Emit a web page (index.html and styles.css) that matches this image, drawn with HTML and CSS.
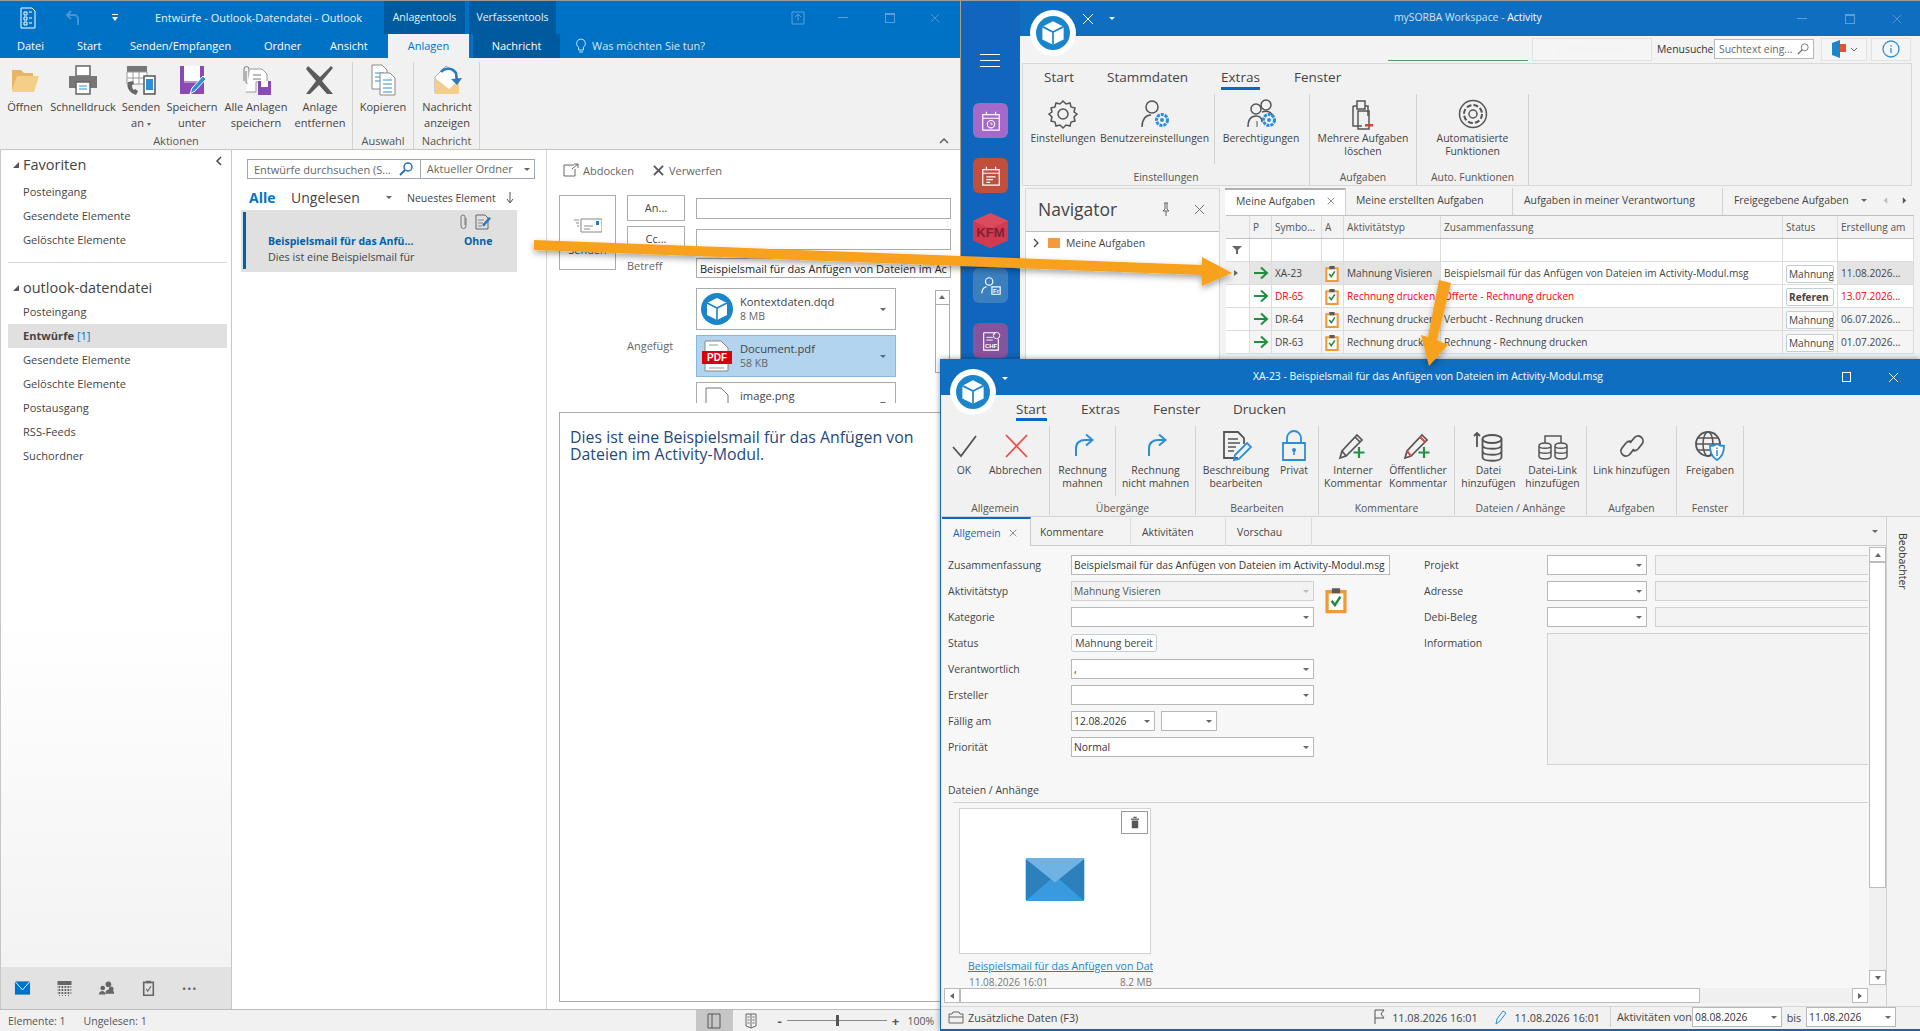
FILE: index.html
```html
<!DOCTYPE html>
<html lang="de">
<head>
    <meta charset="UTF-8">
    <title>Outlook und mySORBA</title>
    <link rel="stylesheet" href="styles.css">
</head>
<body>
    <svg class="defs" width="0" height="0">
        <symbol id="cube" viewBox="0 0 32 32">
            <circle cx="16" cy="16" r="16" fill="#1a85cb"/>
            <path d="M16 5l10 5v12l-10 5-10-5V10z" fill="#fff"/>
            <path d="M6 10l10 5 10-5M16 15v12" fill="none" stroke="#1a85cb" stroke-width="1.6"/>
        </symbol>
        <symbol id="clipboard" viewBox="0 0 16 20">
            <path d="M1.5 4h13v14.500h-13z" fill="#fff" stroke="#f09a37" stroke-width="2.4"/>
            <path d="M5 1.500h6V5H5z" fill="#5a5a5a"/>
            <path d="M4.800 10.500l2.400 3.200 4-6.200" fill="none" stroke="#218a43" stroke-width="1.8"/>
        </symbol>
        <symbol id="go" viewBox="0 0 16 16">
            <path d="M1 8h12M8 2.500L14 8l-6 5.500" fill="none" stroke="#1f8f3f" stroke-width="2"/>
        </symbol>
        <symbol id="turn" viewBox="0 0 32 32">
            <path d="M9 26V18c0-5 4-8 9-8h6M19 4.500l6.500 5.500L19 15.500" fill="none" stroke="#2a8fd6" stroke-width="2"/>
        </symbol>
        <symbol id="pencil-plus" viewBox="0 0 32 32">
            <path d="M3 28l2-7L20 5l5 5L9 26z M5 21l4 5 M18 7l5 5" fill="none" stroke="#555" stroke-width="1.7"/>
            <path d="M22 17v11M16.500 22.500h11" stroke="#259147" stroke-width="2.2"/>
        </symbol>
        <symbol id="trash" viewBox="0 0 12 16">
            <path d="M1 3h10v1.500H1zM4 1h4v1.500H4zM2 5.500h8V15H2z" fill="#555"/>
        </symbol>
        <symbol id="win-close" viewBox="0 0 12 12">
            <path d="M1 1l10 10M11 1L1 11" stroke="currentColor" fill="none" stroke-width="1"/>
        </symbol>
    </svg>

    <!-- Outlook -->
    <div class="window outlook">
        <div class="ol-title">
            <svg class="ol-appicon" viewBox="0 0 18 22"><path d="M2 1h11l3 3v17H2z" fill="none" stroke="#fff"/><path d="M5 5h3v3H5zM10 5h3M5 10h3v3H5zM10 11h3M5 15h3v3H5zM10 16h3" fill="none" stroke="#fff"/></svg>
            <svg class="ol-undo" viewBox="0 0 16 18"><path d="M6 2L2 6l4 4M2 6h7a4 4 0 0 1 4 4v6" fill="none" stroke="#4d93d2" stroke-width="2"/></svg>
            <svg class="ol-qat" viewBox="0 0 8 10"><path d="M1 1h6v1H1zM1 4h6L4 8z" fill="#fff"/></svg>
            <span class="ol-caption">Entwürfe - Outlook-Datendatei - Outlook</span>
            <span class="ctx-tab ctx-a">Anlagentools</span>
            <span class="ctx-tab ctx-b">Verfassentools</span>
            <span class="ol-winbtns">
                <svg class="wb-pin" viewBox="0 0 14 16"><path d="M1 2h12v12H1zM7 11V5M4 7l3-3 3 3" fill="none" stroke="#5a9fd8"/></svg>
                <i class="wb-min"></i>
                <i class="wb-max"></i>
                <svg class="wb-x" viewBox="0 0 12 12"><use href="#win-close"/></svg>
            </span>
        </div>
        <div class="ol-tabs">
            <span>Datei</span>
            <span>Start</span>
            <span>Senden/Empfangen</span>
            <span>Ordner</span>
            <span>Ansicht</span>
            <span class="tab-on">Anlagen</span>
            <span></span>
            <span class="tab-dark">Nachricht</span>
            <span></span>
            <span class="tell-me">
                <svg viewBox="0 0 12 16"><path d="M6 1a4.500 4.500 0 0 0-2.500 8.200V12h5V9.200A4.500 4.500 0 0 0 6 1zM4 14h4" fill="none" stroke="#bfe0f6"/></svg>
                Was möchten Sie tun?
            </span>
        </div>
        <div class="ol-ribbon">
            <div class="rb-group w353">
                <div class="rb-items">
                    <div class="rb-btn w50">
                        <svg viewBox="0 0 32 32"><path d="M3 6h9l3 3h9v4H8L3 27z" fill="#e6b566"/><path d="M8 12h22l-5 16H3z" fill="#f5cf88"/></svg>
                        <span>Öffnen</span>
                    </div>
                    <div class="rb-btn w66">
                        <svg viewBox="0 0 32 32"><path d="M9 2h14v10H9z" fill="#fff" stroke="#666" stroke-width="1.500"/><path d="M2 12h28v12H2z" fill="#777"/><path d="M9 18h14v12H9z" fill="#fff" stroke="#666" stroke-width="1.500"/><path d="M12 22h8M12 25h8" stroke="#2a8fd6"/></svg>
                        <span>Schnelldruck</span>
                    </div>
                    <div class="rb-btn w50">
                        <svg viewBox="0 0 32 32"><path d="M2 2h20v6H2z" fill="#777"/><path d="M2 8h20v12H2z" fill="#fff" stroke="#999"/><path d="M8 8v12M14 8v12M2 14h20" stroke="#999"/><path d="M3 18c-2 6 2 11 8 13l2-4-3-2-1 1c-2-1-2-4-2-5l2-1-1-3z" fill="#666"/><path d="M19 12h11v18H19z" fill="#fff" stroke="#555" stroke-width="1.500"/><path d="M21 15h7v11h-7z" fill="#2a8fd6"/></svg>
                        <span>Senden<br>an<small class="mini-caret"></small></span>
                    </div>
                    <div class="rb-btn w52">
                        <svg viewBox="0 0 32 32"><path d="M4 2h24v28H4z" fill="#8a49b5"/><path d="M8 2h16v15H8z" fill="#fff"/><path d="M8 17h16v2H8z" fill="#b38fd0"/><path d="M14 30l2-6 11-12 3 3-11 12z" fill="#2a8fd6" stroke="#fff"/></svg>
                        <span>Speichern<br>unter</span>
                    </div>
                    <div class="rb-btn w76">
                        <svg viewBox="0 0 32 32"><path d="M4 17V5a2.500 2.500 0 0 1 5 0v13a1.500 1.500 0 0 1-3 0V7" fill="none" stroke="#777"/><path d="M10 5h12l5 5v8H16v10H6" fill="#fff" stroke="#999"/><path d="M13 11h8M13 15h8" stroke="#777"/><path d="M18 17h13v14H18z" fill="#8a49b5"/><path d="M21 17h7v6h-7z" fill="#fff"/></svg>
                        <span>Alle Anlagen<br>speichern</span>
                    </div>
                    <div class="rb-btn w52">
                        <svg viewBox="0 0 32 32"><path d="M4 2l12 11L27 2l2 2-11 13 11 13h-6l-8-9-9 9H2l10-13L2 5z" fill="#5c5c5c"/></svg>
                        <span>Anlage<br>entfernen</span>
                    </div>
                </div>
                <div class="rb-label">Aktionen</div>
            </div>
            <div class="rb-group w61">
                <div class="rb-items">
                    <div class="rb-btn w60">
                        <svg viewBox="0 0 32 32"><path d="M5 1h10l5 5v19H5z" fill="#fff" stroke="#888"/><path d="M8 9h9M8 13h9M8 17h9" stroke="#2a8fd6"/><path d="M13 9h10l5 5v17H13z" fill="#fff" stroke="#888"/><path d="M16 16h9M16 20h9M16 24h9M16 28h9" stroke="#2a8fd6"/></svg>
                        <span>Kopieren</span>
                    </div>
                </div>
                <div class="rb-label">Auswahl</div>
            </div>
            <div class="rb-group w66x">
                <div class="rb-items">
                    <div class="rb-btn w66">
                        <svg viewBox="0 0 32 32"><path d="M4 13L15 2l10 8v19H4z" fill="#fff" stroke="#aaa"/><path d="M4 14l14 11 10-9v14H4z" fill="#f3cd8c"/><path d="M10 8c4-5 12-4 15 1l1 8" fill="none" stroke="#2a78c0" stroke-width="2.500"/><path d="M20 15l6 6 5-7z" fill="#2a78c0"/></svg>
                        <span>Nachricht<br>anzeigen</span>
                    </div>
                </div>
                <div class="rb-label">Nachricht</div>
            </div>
            <svg class="ol-collapse" viewBox="0 0 10 6"><path d="M1 5l4-4 4 4" fill="none" stroke="#555" stroke-width="1.300"/></svg>
        </div>
        <div class="ol-main">
            <div class="ol-folders">
                <div class="folder-scroll">
                    <div class="folder-head first">
                        <span class="fold-tri"></span>Favoriten
                        <svg class="fold-back" viewBox="0 0 6 10"><path d="M5 1L1 5l4 4" fill="none" stroke="#444" stroke-width="1.500"/></svg>
                    </div>
                    <div class="folder">Posteingang</div>
                    <div class="folder">Gesendete Elemente</div>
                    <div class="folder">Gelöschte Elemente</div>
                    <hr class="folder-line">
                    <div class="folder-head"><span class="fold-tri"></span>outlook-datendatei</div>
                    <div class="folder">Posteingang</div>
                    <div class="folder folder-on"><b>Entwürfe</b> <em>[1]</em></div>
                    <div class="folder">Gesendete Elemente</div>
                    <div class="folder">Gelöschte Elemente</div>
                    <div class="folder">Postausgang</div>
                    <div class="folder">RSS-Feeds</div>
                    <div class="folder">Suchordner</div>
                </div>
                <div class="ol-nav">
                    <svg viewBox="0 0 18 16"><path d="M1 1h16v14H1z" fill="#0072c6"/><path d="M1 1l8 9 8-9" fill="none" stroke="#fff"/></svg>
                    <svg viewBox="0 0 16 16"><path d="M1 1h14v4H1z" fill="#666"/><path d="M1 7h14M1 10h14M1 13h14M3 6v10M6 6v10M9 6v10M12 6v10" stroke="#666" stroke-dasharray="2 1"/></svg>
                    <svg viewBox="0 0 18 16"><circle cx="11" cy="4" r="3" fill="#666"/><circle cx="5" cy="8" r="2.500" fill="#666"/><circle cx="14" cy="9" r="2.500" fill="#666"/><path d="M1 15c0-5 7-5 7 0zM8 13c0-5 9-5 9 0v1H8z" fill="#666"/></svg>
                    <svg viewBox="0 0 14 20"><path d="M1 3h12v16H1z" fill="none" stroke="#666" stroke-width="2"/><path d="M4 1h6v3H4z" fill="#666"/><path d="M4 11l2 3 4-6" fill="none" stroke="#666" stroke-width="1.300"/></svg>
                    <span class="nav-more">•••</span>
                </div>
            </div>
            <div class="ol-list">
                <div class="search-box">
                    <span class="search-text">Entwürfe durchsuchen (S...</span>
                    <svg viewBox="0 0 14 14"><circle cx="9" cy="5" r="4" fill="none" stroke="#2a6fb5" stroke-width="1.500"/><path d="M6 8l-5 5" stroke="#2a6fb5" stroke-width="2"/></svg>
                    <span class="search-scope">Aktueller Ordner<i class="caret"></i></span>
                </div>
                <div class="list-filter">
                    <b>Alle</b>
                    <span class="unread">Ungelesen</span>
                    <i class="caret"></i>
                    <span class="sort">Neuestes Element</span>
                    <svg viewBox="0 0 8 12"><path d="M4 0v10M1 7l3 4 3-4" fill="none" stroke="#555"/></svg>
                </div>
                <div class="mail-item">
                    <div class="mail-icons">
                        <svg viewBox="0 0 8 16"><path d="M6.500 4v8a2.500 2.500 0 0 1-5 0V3a2 2 0 0 1 4 0v8" fill="none" stroke="#777"/></svg>
                        <svg viewBox="0 0 16 16"><path d="M1 1h9l3 3v11H1z" fill="none" stroke="#666"/><path d="M3 6h6M3 9h5M3 12h4" stroke="#888"/><path d="M7 11l7-8 2 1.500-7 8z" fill="#2a78c0"/></svg>
                    </div>
                    <div class="mail-row"><b>Beispielsmail für das Anfü...</b><b class="mail-ohne">Ohne</b></div>
                    <div class="mail-text">Dies ist eine Beispielsmail für</div>
                </div>
            </div>
            <div class="ol-read">
                <div class="read-bar">
                    <svg viewBox="0 0 16 14"><path d="M11 2H1v11h11V6M9 6l6-5M11 1h4v4" fill="none" stroke="#666"/></svg>
                    <span>Abdocken</span>
                    <svg class="x-small" viewBox="0 0 12 12"><path d="M1 1l10 10M11 1L1 11" stroke="#555" stroke-width="2"/></svg>
                    <span>Verwerfen</span>
                </div>
                <div class="compose">
                    <div class="send-btn">
                        <svg viewBox="0 0 28 16"><path d="M7 2h21v13H7z" fill="#fff" stroke="#888"/><path d="M22 4h3v4h-3z" fill="#2a78c0"/><path d="M10 9h9M10 12h6M0 3h5M2 6h3M3 9h2" stroke="#888"/></svg>
                        <span>Senden</span>
                    </div>
                    <div class="addr-btn">An...</div>
                    <div class="addr-input"></div>
                    <div class="addr-btn">Cc...</div>
                    <div class="addr-input"></div>
                    <div class="field-label">Betreff</div>
                    <div class="addr-input subject">Beispielsmail für das Anfügen von Dateien im Ac</div>
                </div>
                <div class="attach-row">
                    <div class="field-label">Angefügt</div>
                    <div class="attach-list">
                        <div class="attach">
                            <svg class="att-icon" viewBox="0 0 32 32"><use href="#cube"/></svg>
                            <div class="att-name">Kontextdaten.dqd<small>8 MB</small></div>
                            <i class="caret"></i>
                        </div>
                        <div class="attach attach-on">
                            <svg class="att-icon" viewBox="0 0 32 32"><path d="M4 1h16l7 7v23H4z" fill="#fff" stroke="#888"/><path d="M8 28h15M8 5h9" stroke="#999"/><path d="M1 11h30v13H1z" fill="#d9000d"/><text x="16" y="21" text-anchor="middle" class="pdf-text">PDF</text></svg>
                            <div class="att-name">Document.pdf<small>58 KB</small></div>
                            <i class="caret"></i>
                        </div>
                        <div class="attach attach-cut">
                            <svg class="att-icon" viewBox="0 0 32 32"><path d="M5 1h15l7 7v23H5z" fill="#fff" stroke="#777"/><path d="M8 17h18v12H8z" fill="#2a78c0"/></svg>
                            <div class="att-name">image.png</div>
                            <i class="caret"></i>
                        </div>
                    </div>
                    <div class="att-scroll"><i class="att-up"></i></div>
                </div>
                <div class="mail-body">Dies ist eine Beispielsmail für das Anfügen von Dateien im Activity-Modul.</div>
            </div>
        </div>
        <div class="ol-status">
            <span>Elemente: 1</span>
            <span class="st-unread">Ungelesen: 1</span>
            <span class="st-view st-view-on"><svg viewBox="0 0 14 16"><path d="M1 1h12v14H1zM5 1v14" fill="none" stroke="#555"/></svg></span>
            <span class="st-view"><svg viewBox="0 0 12 16"><path d="M1 1h10v12L6 15 1 13zM6 1v14M2.500 4h2M2.500 7h2M2.500 10h2M7.500 4h2M7.500 7h2M7.500 10h2" fill="none" stroke="#666"/></svg></span>
            <span class="zoom-bar"><b>-</b><span class="zoom-line"><i></i></span><b>+</b></span>
            <span class="zoom-val">100%</span>
        </div>
    </div>

    <!-- mySORBA Hauptfenster -->
    <div class="window sorba">
        <div class="sb-side">
            <div class="burger"><i></i><i></i><i></i></div>
            <div class="tile t-purple">
                <svg viewBox="0 0 24 24"><path d="M3 5h18v17H3zM3 9h18M7 2v4M17 2v4" fill="none" stroke="#fff" stroke-width="1.300"/><circle cx="12" cy="15.500" r="4" fill="none" stroke="#fff" stroke-width="1.200"/><path d="M12 13.500v2h2" fill="none" stroke="#fff"/></svg>
            </div>
            <div class="tile t-red">
                <svg viewBox="0 0 24 24"><path d="M3 5h18v17H3zM3 9h18M7 2v4M17 2v4M7 13h10M7 16h7M7 19h4" fill="none" stroke="#fff" stroke-width="1.300"/></svg>
            </div>
            <div class="tile t-kfm">
                <svg viewBox="0 0 36 36"><path d="M18 0l18 8v20l-18 8L0 28V8z" fill="#dc4a5e"/><path d="M0 8l18 8 18-8v20l-18 8L0 28z" fill="#d23a50"/><text x="18" y="25" text-anchor="middle" class="kfm-text">KFM</text></svg>
            </div>
            <div class="tile t-blue">
                <svg viewBox="0 0 24 24"><circle cx="10" cy="7" r="4" fill="none" stroke="#fff" stroke-width="1.300"/><path d="M2 20c0-5 3-7 5-7M13 13h9v8h-9z" fill="none" stroke="#fff" stroke-width="1.300"/><text x="17.500" y="20" text-anchor="middle" class="tile-text">Fr</text></svg>
            </div>
            <div class="tile t-plum">
                <svg viewBox="0 0 24 24"><path d="M4 3h12v2M4 3v19h16V10" fill="none" stroke="#fff" stroke-width="1.300"/><circle cx="18" cy="6" r="3.500" fill="none" stroke="#fff"/><path d="M7 8h7M7 11h7" stroke="#fff"/><text x="12" y="19.500" text-anchor="middle" class="tile-text">CHF</text></svg>
            </div>
        </div>
        <div class="sb-main">
            <div class="sb-title">
                <svg class="sb-x" viewBox="0 0 12 12"><use href="#win-close"/></svg>
                <i class="caret caret-white"></i>
                <span class="sb-caption">mySORBA Workspace - <b>Activity</b></span>
                <span class="sb-winbtns">
                    <i class="wb-min"></i>
                    <i class="wb-max"></i>
                    <svg class="wb-x" viewBox="0 0 12 12"><use href="#win-close"/></svg>
                </span>
            </div>
            <div class="sb-tools">
                <span class="tool-green"></span>
                <span class="tool-box tool-company">FritzMusterAG</span>
                <span class="tool-label">Menusuche</span>
                <span class="tool-search">Suchtext eing...
                    <svg viewBox="0 0 14 14"><circle cx="9" cy="5" r="4" fill="none" stroke="#666"/><path d="M6 8l-5 5" stroke="#666" stroke-width="1.500"/></svg>
                </span>
                <span class="tool-box tool-flag">
                    <svg viewBox="0 0 16 18"><path d="M1 3l8-3v18l-8-3z" fill="#1a85cb"/><path d="M9 4h6v8H9z" fill="#e8532a"/></svg>
                    <svg class="chev" viewBox="0 0 8 5"><path d="M1 1l3 3 3-3" fill="none" stroke="#666"/></svg>
                </span>
                <span class="tool-box tool-info">
                    <svg viewBox="0 0 18 18"><circle cx="9" cy="9" r="8" fill="none" stroke="#2a8fd6" stroke-width="1.300"/><path d="M9 8v5M9 5v1.500" stroke="#2a8fd6" stroke-width="1.300"/></svg>
                </span>
            </div>
            <div class="sb-ribbon">
                <div class="sb-tabs">
                    <span class="tab-start">Start</span>
                    <span class="tab-stamm">Stammdaten</span>
                    <span class="tab-extras">Extras</span>
                    <span>Fenster</span>
                </div>
                <div class="sb-groups">
                    <div class="sb-group g287">
                        <div class="rb-items pad8">
                            <div class="sb-btn w64">
                                <svg viewBox="0 0 32 32"><path d="M16 3l3 3 4-1 1 4 4 1-1 4 3 2-3 3 1 4-4 1-1 4-4-1-3 3-3-3-4 1-1-4-4-1 1-4-3-3 3-2-1-4 4-1 1-4 4 1z" fill="none" stroke="#555" stroke-width="1.500"/><circle cx="16" cy="16" r="5" fill="none" stroke="#555" stroke-width="1.500"/></svg>
                                <span>Einstellungen</span>
                            </div>
                            <div class="sb-btn w120 sep-short">
                                <svg viewBox="0 0 32 32"><circle cx="13" cy="9" r="6" fill="none" stroke="#555" stroke-width="1.500"/><path d="M3 29c0-8 4-12 9-12" fill="none" stroke="#555" stroke-width="1.500"/><circle cx="23" cy="22" r="5.500" fill="none" stroke="#2a8fd6" stroke-width="3" stroke-dasharray="3 1"/><circle cx="23" cy="22" r="2" fill="#2a8fd6"/></svg>
                                <span>Benutzereinstellungen</span>
                            </div>
                            <div class="sb-btn w92">
                                <svg viewBox="0 0 32 32"><circle cx="21" cy="7" r="5" fill="none" stroke="#555" stroke-width="1.500"/><circle cx="11" cy="11" r="5" fill="none" stroke="#555" stroke-width="1.500"/><path d="M3 29c0-7 3-11 8-11s6 3 6 6M17 14c5-2 10 0 11 5" fill="none" stroke="#555" stroke-width="1.500"/><path d="M12 23v6" stroke="#555"/><circle cx="24" cy="22" r="5.500" fill="none" stroke="#2a8fd6" stroke-width="3" stroke-dasharray="3 1"/><circle cx="24" cy="22" r="2" fill="#2a8fd6"/></svg>
                                <span>Berechtigungen</span>
                            </div>
                        </div>
                        <div class="rb-label">Einstellungen</div>
                    </div>
                    <div class="sb-group g107">
                        <div class="rb-items">
                            <div class="sb-btn w106">
                                <svg viewBox="0 0 32 32"><path d="M6 8h4M18 8h3v10" fill="none" stroke="#555" stroke-width="1.500"/><path d="M10 3h8v8h-8zM6 8v20h9" fill="none" stroke="#555" stroke-width="1.500"/><path d="M11 13h11v18H11z" fill="none" stroke="#555" stroke-width="1.500"/><path d="M18 26h8v2.500h-8z" fill="#e03c3c"/></svg>
                                <span>Mehrere Aufgaben<br>löschen</span>
                            </div>
                        </div>
                        <div class="rb-label">Aufgaben</div>
                    </div>
                    <div class="sb-group g112">
                        <div class="rb-items">
                            <div class="sb-btn w111">
                                <svg viewBox="0 0 32 32"><circle cx="16" cy="16" r="13.500" fill="none" stroke="#555" stroke-width="1.500"/><circle cx="16" cy="16" r="9" fill="none" stroke="#555" stroke-width="2" stroke-dasharray="5 2.100"/><circle cx="16" cy="16" r="4" fill="none" stroke="#555" stroke-width="1.500"/></svg>
                                <span>Automatisierte<br>Funktionen</span>
                            </div>
                        </div>
                        <div class="rb-label">Auto. Funktionen</div>
                    </div>
                </div>
            </div>
            <div class="sb-lower">
                <div class="navigator">
                    <div class="nav-head">
                        <span>Navigator</span>
                        <svg class="nav-pin" viewBox="0 0 10 14"><path d="M3 1h4M4 1v6L2 9h6L6 7V1M5 9v5" fill="none" stroke="#666"/></svg>
                        <svg class="nav-x" viewBox="0 0 12 12"><use href="#win-close"/></svg>
                    </div>
                    <div class="nav-tree">
                        <svg class="tree-chev" viewBox="0 0 6 10"><path d="M1 1l4 4-4 4" fill="none" stroke="#444" stroke-width="1.300"/></svg>
                        <i class="tree-folder"></i>
                        <span>Meine Aufgaben</span>
                    </div>
                </div>
                <div class="tasks">
                    <div class="task-tabs">
                        <span class="ttab ttab-on">Meine Aufgaben<svg class="ttab-x" viewBox="0 0 12 12"><use href="#win-close"/></svg></span>
                        <span class="ttab ttab-2">Meine erstellten Aufgaben</span>
                        <span class="ttab ttab-3">Aufgaben in meiner Verantwortung</span>
                        <span class="ttab ttab-4">Freigegebene Aufgaben</span>
                        <i class="caret"></i>
                        <svg class="tt-arrow" viewBox="0 0 6 10"><path d="M5 1L1 5l4 4z" fill="#bbb"/></svg>
                        <svg class="tt-arrow" viewBox="0 0 6 10"><path d="M1 1l4 4-4 4z" fill="#555"/></svg>
                    </div>
                    <div class="grid">
                        <div class="grow ghead">
                            <span></span><span>P</span><span>Symbo...</span><span>A</span><span>Aktivitätstyp</span><span>Zusammenfassung</span><span>Status</span><span>Erstellung am</span>
                        </div>
                        <div class="grow gfilter">
                            <span><svg class="filter-ic" viewBox="0 0 10 8"><path d="M0 0h10L6 4v4H4V4z" fill="#666"/></svg></span><span></span><span></span><span></span><span></span><span></span><span></span><span></span>
                        </div>
                        <div class="grow row-sel">
                            <span class="cell-ind"><i class="row-mark"></i></span>
                            <span class="cell-ic"><svg viewBox="0 0 16 16"><use href="#go"/></svg></span>
                            <span>XA-23</span>
                            <span class="cell-ic"><svg class="clip" viewBox="0 0 16 20"><use href="#clipboard"/></svg></span>
                            <span>Mahnung Visieren</span>
                            <span class="cell-white">Beispielsmail für das Anfügen von Dateien im Activity-Modul.msg</span>
                            <span class="cell-white"><em class="badge">Mahnung</em></span>
                            <span>11.08.2026...</span>
                        </div>
                        <div class="grow row-red">
                            <span class="cell-ind"></span>
                            <span class="cell-ic"><svg viewBox="0 0 16 16"><use href="#go"/></svg></span>
                            <span>DR-65</span>
                            <span class="cell-ic"><svg class="clip" viewBox="0 0 16 20"><use href="#clipboard"/></svg></span>
                            <span>Rechnung drucken</span>
                            <span>Offerte - Rechnung drucken</span>
                            <span><em class="badge badge-b">Referen</em></span>
                            <span>13.07.2026...</span>
                        </div>
                        <div class="grow row-alt">
                            <span class="cell-ind"></span>
                            <span class="cell-ic"><svg viewBox="0 0 16 16"><use href="#go"/></svg></span>
                            <span>DR-64</span>
                            <span class="cell-ic"><svg class="clip" viewBox="0 0 16 20"><use href="#clipboard"/></svg></span>
                            <span>Rechnung drucken</span>
                            <span>Verbucht - Rechnung drucken</span>
                            <span><em class="badge">Mahnung</em></span>
                            <span>06.07.2026...</span>
                        </div>
                        <div class="grow row-alt">
                            <span class="cell-ind"></span>
                            <span class="cell-ic"><svg viewBox="0 0 16 16"><use href="#go"/></svg></span>
                            <span>DR-63</span>
                            <span class="cell-ic"><svg class="clip" viewBox="0 0 16 20"><use href="#clipboard"/></svg></span>
                            <span>Rechnung drucken</span>
                            <span>Rechnung - Rechnung drucken</span>
                            <span><em class="badge">Mahnung</em></span>
                            <span>01.07.2026...</span>
                        </div>
                    </div>
                </div>
            </div>
        </div>
    </div>

    <!-- Aktivitaet -->
    <div class="window activity">
        <div class="ac-title">
            <span class="ac-caption">XA-23 - Beispielsmail für das Anfügen von Dateien im Activity-Modul.msg</span>
            <i class="wb-max ac-max"></i>
            <svg class="ac-close" viewBox="0 0 12 12"><use href="#win-close"/></svg>
        </div>
        <div class="ac-ribbon">
            <div class="ac-tabs">
                <span class="ac-tab-on">Start</span>
                <span class="ac-tab-2">Extras</span>
                <span class="ac-tab-3">Fenster</span>
                <span>Drucken</span>
            </div>
            <div class="ac-groups">
                <div class="ac-group g109">
                    <div class="rb-items">
                        <div class="ac-btn w46">
                            <svg viewBox="0 0 32 32"><path d="M5 17l8 9L28 6" fill="none" stroke="#555" stroke-width="1.800"/></svg>
                            <span>OK</span>
                        </div>
                        <div class="ac-btn w57">
                            <svg viewBox="0 0 32 32"><path d="M6 5l21 22M27 5L6 27" stroke="#ef4a4a" stroke-width="1.800"/></svg>
                            <span>Abbrechen</span>
                        </div>
                    </div>
                    <div class="rb-label">Allgemein</div>
                </div>
                <div class="ac-group g146">
                    <div class="rb-items">
                        <div class="ac-btn w66 sep-inner">
                            <svg viewBox="0 0 32 32"><use href="#turn"/></svg>
                            <span>Rechnung<br>mahnen</span>
                        </div>
                        <div class="ac-btn w79">
                            <svg viewBox="0 0 32 32"><use href="#turn"/></svg>
                            <span>Rechnung<br>nicht mahnen</span>
                        </div>
                    </div>
                    <div class="rb-label">Übergänge</div>
                </div>
                <div class="ac-group g123">
                    <div class="rb-items">
                        <div class="ac-btn w80">
                            <svg viewBox="0 0 32 32"><path d="M18 28H4V2h14l6 6v6" fill="none" stroke="#555" stroke-width="1.800"/><path d="M8 9h10M8 13h12M8 17h8M8 21h6" stroke="#555" stroke-width="1.500"/><path d="M14 30l1-5L27 13l4 4-12 12z" fill="none" stroke="#2a8fd6" stroke-width="1.800"/></svg>
                            <span>Beschreibung<br>bearbeiten</span>
                        </div>
                        <div class="ac-btn w36">
                            <svg viewBox="0 0 32 32"><path d="M5 13h22v17H5zM9 13V8a7 7 0 0 1 14 0v5" fill="none" stroke="#2a8fd6" stroke-width="1.800"/><circle cx="16" cy="20" r="2" fill="#2a8fd6"/><path d="M16 21v4" stroke="#2a8fd6" stroke-width="1.500"/></svg>
                            <span>Privat</span>
                        </div>
                    </div>
                    <div class="rb-label">Bearbeiten</div>
                </div>
                <div class="ac-group g136">
                    <div class="rb-items">
                        <div class="ac-btn w68">
                            <svg viewBox="0 0 32 32"><use href="#pencil-plus"/></svg>
                            <span>Interner<br>Kommentar</span>
                        </div>
                        <div class="ac-btn w62">
                            <svg viewBox="0 0 32 32"><use href="#pencil-plus"/><path d="M18 7l5 5M5 21l4 5" stroke="#ef4a4a" stroke-width="1.800"/></svg>
                            <span>Öffentlicher<br>Kommentar</span>
                        </div>
                    </div>
                    <div class="rb-label">Kommentare</div>
                </div>
                <div class="ac-group g132">
                    <div class="rb-items">
                        <div class="ac-btn w67">
                            <svg viewBox="0 0 32 32"><ellipse cx="19" cy="9" rx="9.500" ry="4" fill="none" stroke="#555" stroke-width="1.800"/><path d="M9.500 9v18c0 5 19 5 19 0V9M9.500 15c0 5 19 5 19 0M9.500 21c0 5 19 5 19 0M4 17V3M1 6l3-3 3 3" fill="none" stroke="#555" stroke-width="1.800"/></svg>
                            <span>Datei<br>hinzufügen</span>
                        </div>
                        <div class="ac-btn w61">
                            <svg viewBox="0 0 32 32"><path d="M8 13V6h16v7" fill="none" stroke="#555" stroke-width="1.500"/><path d="M2 16c0-4 12-4 12 0v10c0 4-12 4-12 0zM2 16c0 3 12 3 12 0M2 21c0 3 12 3 12 0M18 16c0-4 12-4 12 0v10c0 4-12 4-12 0zM18 16c0 3 12 3 12 0M18 21c0 3 12 3 12 0" fill="none" stroke="#555" stroke-width="1.500"/></svg>
                            <span>Datei-Link<br>hinzufügen</span>
                        </div>
                    </div>
                    <div class="rb-label">Dateien / Anhänge</div>
                </div>
                <div class="ac-group g90">
                    <div class="rb-items">
                        <div class="ac-btn w89">
                            <svg viewBox="0 0 32 32"><path d="M14 13l4-5a5 5 0 0 1 8 6l-4 5a5 5 0 0 1-6 1M18 19l-4 5a5 5 0 0 1-8-6l4-5a5 5 0 0 1 6-1" fill="none" stroke="#555" stroke-width="1.800"/></svg>
                            <span>Link hinzufügen</span>
                        </div>
                    </div>
                    <div class="rb-label">Aufgaben</div>
                </div>
                <div class="ac-group g67">
                    <div class="rb-items">
                        <div class="ac-btn w66">
                            <svg viewBox="0 0 32 32"><circle cx="14" cy="14" r="12" fill="none" stroke="#555" stroke-width="1.800"/><ellipse cx="14" cy="14" rx="5" ry="12" fill="none" stroke="#555" stroke-width="1.500"/><path d="M2 14h24M4 8h20M4 20h20" stroke="#555" stroke-width="1.500"/><path d="M23 14c2 1.500 4 2 7 2 0 7-2 11-7 14-5-3-7-7-7-14 3 0 5-.5 7-2z" fill="#fff" stroke="#2a8fd6" stroke-width="1.800"/><path d="M23 20v6M23 17.500v1.500" stroke="#2a8fd6" stroke-width="1.500"/></svg>
                            <span>Freigaben</span>
                        </div>
                    </div>
                    <div class="rb-label">Fenster</div>
                </div>
            </div>
        </div>
        <div class="ac-body">
            <div class="ac-pane">
                <div class="ac-pagetabs">
                    <span class="pt pt-on">Allgemein<svg class="ttab-x" viewBox="0 0 12 12"><use href="#win-close"/></svg></span>
                    <span class="pt pt-2">Kommentare</span>
                    <span class="pt pt-3">Aktivitäten</span>
                    <span class="pt pt-4">Vorschau</span>
                    <i class="caret pt-caret"></i>
                </div>
                <div class="ac-scroll">
                    <div class="ac-content">
                        <div class="form">
                            <div class="form-left">
                                <label>Zusammenfassung</label>
                                <div class="inp span2">Beispielsmail für das Anfügen von Dateien im Activity-Modul.msg</div>
                                <label>Aktivitätstyp</label>
                                <div class="inp combo inp-off">Mahnung Visieren<i class="caret"></i></div>
                                <svg class="type-icon" viewBox="0 0 16 20"><use href="#clipboard"/></svg>
                                <label>Kategorie</label>
                                <div class="inp combo"><i class="caret"></i></div>
                                <label>Status</label>
                                <div class="status-row"><em class="badge badge-wide">Mahnung bereit</em></div>
                                <label>Verantwortlich</label>
                                <div class="inp combo">,<i class="caret"></i></div>
                                <label>Ersteller</label>
                                <div class="inp combo"><i class="caret"></i></div>
                                <label>Fällig am</label>
                                <div class="date-row">
                                    <div class="inp combo date">12.08.2026<i class="caret"></i></div>
                                    <div class="inp combo time"><i class="caret"></i></div>
                                </div>
                                <label>Priorität</label>
                                <div class="inp combo">Normal<i class="caret"></i></div>
                            </div>
                            <div class="form-right">
                                <label>Projekt</label>
                                <div class="inp combo"><i class="caret"></i></div>
                                <div class="inp inp-off"></div>
                                <label>Adresse</label>
                                <div class="inp combo"><i class="caret"></i></div>
                                <div class="inp inp-off"></div>
                                <label>Debi-Beleg</label>
                                <div class="inp combo"><i class="caret"></i></div>
                                <div class="inp inp-off"></div>
                                <label>Information</label>
                                <div class="info-box"></div>
                            </div>
                        </div>
                        <div class="files-label">Dateien / Anhänge</div>
                        <div class="files">
                            <div class="file-card">
                                <div class="file-preview">
                                    <span class="file-del"><svg viewBox="0 0 12 16"><use href="#trash"/></svg></span>
                                    <svg class="file-env" viewBox="0 0 60 44"><path d="M2 0h56a2 2 0 0 1 2 2v40a2 2 0 0 1-2 2H2a2 2 0 0 1-2-2V2a2 2 0 0 1 2-2z" fill="#2c81bd"/><path d="M0 44l30-26 30 26z" fill="#3a9ade"/><path d="M0 1l30 24L60 1V0H0z" fill="#6fb3e4"/></svg>
                                </div>
                                <a class="file-link">Beispielsmail für das Anfügen von Date</a>
                                <div class="file-meta"><span>11.08.2026 16:01</span><span>8.2 MB</span></div>
                            </div>
                        </div>
                    </div>
                    <div class="vscroll">
                        <span class="sb-btn-up"><i class="tri-up"></i></span>
                        <span class="vthumb"></span>
                        <span class="sb-btn-down"><i class="tri-down"></i></span>
                    </div>
                </div>
                <div class="hscroll">
                    <span class="hbtn"><i class="tri-left"></i></span>
                    <span class="hthumb"></span>
                    <span class="hbtn hbtn-r"><i class="tri-right"></i></span>
                </div>
            </div>
            <div class="ac-side"><span>Beobachter</span></div>
        </div>
        <div class="ac-status">
            <svg class="st-folder" viewBox="0 0 16 14"><path d="M1 13V4h3l1-2h6l1 2h3v9zM1 7h14" fill="none" stroke="#666"/></svg>
            <span>Zusätzliche Daten (F3)</span>
            <svg class="st-flag" viewBox="0 0 12 16"><path d="M2 15V1h9L8 5l3 4H2" fill="none" stroke="#555"/></svg>
            <span>11.08.2026 16:01</span>
            <svg class="st-pen" viewBox="0 0 12 16"><path d="M1 15l1-5 6-8 3 2-6 8z" fill="none" stroke="#2a8fd6"/></svg>
            <span>11.08.2026 16:01</span>
            <span class="st-sep">Aktivitäten von</span>
            <div class="inp combo st-date">08.08.2026<i class="caret"></i></div>
            <span class="st-bis">bis</span>
            <div class="inp combo st-date">11.08.2026<i class="caret"></i></div>
        </div>
    </div>

    <!-- Logos liegen ueber den Titelleisten -->
    <svg class="logo logo-back" viewBox="0 0 46 46"><circle cx="23" cy="23" r="23" fill="#fff"/><use href="#cube" x="6" y="6" width="34" height="34"/></svg>
    <svg class="logo logo-front" viewBox="0 0 46 46"><circle cx="23" cy="23" r="23" fill="#fff"/><use href="#cube" x="6" y="6" width="34" height="34"/></svg>
    <i class="caret caret-white logo-caret"></i>

    <!-- orange Pfeile -->
    <svg class="arrows" viewBox="0 0 1920 1031">
        <defs>
            <filter id="shadow" x="-5%" y="-20%" width="110%" height="160%">
                <feDropShadow dx="0" dy="3" stdDeviation="3" flood-color="#000" flood-opacity="0.35"/>
            </filter>
        </defs>
        <polygon filter="url(#shadow)" fill="#f7a11c" points="534,240 1202,265 1202,257 1232,273 1202,286 1202,275 534,250"/>
        <polygon filter="url(#shadow)" fill="#f7a11c" points="1439,280 1451,283 1437,340 1448,345 1429,366 1421,335 1428,337"/>
    </svg>
</body>
</html>
```

FILE: styles.css
```css
* {
    margin: 0;
    padding: 0;
    box-sizing: border-box;
}

body {
    position: relative;
    width: 1920px;
    height: 1031px;
    overflow: hidden;
    background: #d0d0d0;
    font-family: "Open Sans", "Noto Sans", sans-serif;
    font-size: 11px;
    color: #444;
}

i, em {
    font-style: normal;
}

svg {
    display: block;
    flex: none;
}

.defs {
    position: absolute;
}

.window {
    position: absolute;
    overflow: hidden;
}

.caret {
    display: inline-block;
    width: 0;
    height: 0;
    border-left: 3px solid transparent;
    border-right: 3px solid transparent;
    border-top: 3px solid #666;
    flex: none;
}

.caret-white {
    border-top-color: #fff;
}

/* ---------- Outlook ---------- */
.outlook {
    left: 0;
    top: 0;
    width: 960px;
    height: 1031px;
    display: flex;
    flex-direction: column;
    background: #fff;
    border-top: 1px solid #9a9a9a;
}

.ol-title {
    height: 33px;
    background: #0072c6;
    color: #e8f2fa;
    display: flex;
    align-items: center;
    flex: none;
}

.ol-appicon {
    width: 18px;
    height: 22px;
    margin-left: 19px;
}

.ol-undo {
    width: 16px;
    height: 18px;
    margin-left: 28px;
}

.ol-qat {
    width: 8px;
    height: 10px;
    margin-left: 30px;
}

.ol-caption {
    width: 229px;
    margin-left: 36px;
    white-space: nowrap;
}

.ctx-tab {
    height: 33px;
    line-height: 33px;
    background: #005a9e;
    text-align: center;
    font-size: 10.5px;
}

.ctx-a {
    width: 81px;
}

.ctx-b {
    width: 87px;
    margin-left: 4px;
}

.ol-winbtns {
    margin-left: auto;
    display: flex;
    align-items: center;
    width: 169px;
}

.wb-pin {
    width: 14px;
    height: 16px;
}

.wb-min {
    width: 10px;
    height: 1px;
    background: #5a9fd8;
    margin-left: 33px;
}

.wb-max {
    width: 10px;
    height: 10px;
    border: 1px solid #5a9fd8;
    border-top-width: 2px;
    margin-left: 37px;
}

.wb-x {
    width: 10px;
    height: 10px;
    margin-left: 35px;
    color: #5a9fd8;
}

.ol-tabs {
    height: 24px;
    flex: none;
    background: #0072c6;
    color: #fff;
    padding-left: 17px;
    display: grid;
    grid-template-columns: 60px 53px 134px 66px 58px 81px 4px 87px 15px auto;
    align-items: center;
    line-height: 24px;
    white-space: nowrap;
}

.tab-on {
    background: #f1f1f1;
    color: #0072c6;
    text-align: center;
}

.tab-dark {
    background: #005a9e;
    text-align: center;
}

.tell-me {
    display: flex;
    align-items: center;
    gap: 5px;
    color: #d4e8f7;
}

.tell-me svg {
    width: 12px;
    height: 16px;
}

.ol-ribbon {
    position: relative;
    height: 92px;
    flex: none;
    background: #f1f1f1;
    border-bottom: 1px solid #c6c6c6;
    display: flex;
}

.rb-group {
    display: flex;
    flex-direction: column;
    border-right: 1px solid #d2d2d2;
    margin-top: 4px;
    height: 87px;
    flex: none;
}

.w353 { width: 353px; }
.w61 { width: 61px; }
.w66x { width: 66px; }

.rb-items {
    display: flex;
    flex: 1;
}

.rb-btn {
    flex: none;
    display: flex;
    flex-direction: column;
    align-items: center;
    text-align: center;
    padding-top: 2px;
    line-height: 16px;
    white-space: nowrap;
}

.rb-btn svg {
    width: 32px;
    height: 32px;
    margin-bottom: 3px;
}

.rb-btn span {
    display: block;
}

.w36 { width: 36px; }
.w46 { width: 46px; }
.w50 { width: 50px; }
.w52 { width: 52px; }
.w57 { width: 57px; }
.w60 { width: 60px; }
.w62 { width: 62px; }
.w64 { width: 64px; }
.w66 { width: 66px; }
.w67 { width: 67px; }
.w68 { width: 68px; }
.w76 { width: 76px; }
.w79 { width: 79px; }
.w80 { width: 80px; }
.w89 { width: 89px; }
.w92 { width: 92px; }
.w106 { width: 106px; }
.w111 { width: 111px; }
.w120 { width: 120px; }

.rb-label {
    text-align: center;
    line-height: 16px;
    color: #555;
    flex: none;
}

.mini-caret {
    display: inline-block;
    margin-left: 3px;
    vertical-align: middle;
    border-left: 2.5px solid transparent;
    border-right: 2.5px solid transparent;
    border-top: 3px solid #666;
}

.ol-collapse {
    position: absolute;
    right: 11px;
    bottom: 5px;
    width: 10px;
    height: 6px;
}

.ol-main {
    flex: 1;
    min-height: 0;
    display: flex;
}

.ol-folders {
    width: 232px;
    flex: none;
    display: flex;
    flex-direction: column;
    border-right: 1px solid #c6c6c6;
    background: linear-gradient(#fff 55%, #f1f1f1);
}

.folder-scroll {
    flex: 1;
    padding-left: 7px;
    padding-right: 4px;
    border-left: 1px solid #c6c6c6;
}

.folder-head {
    position: relative;
    font-size: 14.5px;
    line-height: 22px;
    padding-left: 15px;
    color: #444;
    margin-top: 14px;
    margin-bottom: 1px;
}

.folder-head.first {
    margin-top: 4px;
    margin-bottom: 4px;
}

.fold-tri {
    position: absolute;
    left: 5px;
    top: 8px;
    width: 0;
    height: 0;
    border-left: 6px solid transparent;
    border-bottom: 6px solid #555;
}

.fold-back {
    position: absolute;
    right: 5px;
    top: 2px;
    width: 6px;
    height: 10px;
}

.folder {
    height: 24px;
    line-height: 24px;
    padding-left: 15px;
    font-size: 11.1px;
}

.folder em {
    color: #0072c6;
}

.folder-on {
    background: #e0e0e0;
}

.folder-line {
    border: none;
    border-top: 1px solid #d6d6d6;
    margin-top: 10px;
}

.ol-nav {
    height: 42px;
    flex: none;
    background: #e2e2e2;
    display: flex;
    align-items: center;
    padding-left: 13px;
    gap: 25px;
    border-left: 1px solid #c6c6c6;
}

.ol-nav svg {
    width: 17px;
    height: 16px;
}

.nav-more {
    font-size: 11px;
    letter-spacing: 1px;
    color: #666;
}

.ol-list {
    width: 315px;
    flex: none;
    border-right: 1px solid #d6d6d6;
    padding-top: 9px;
}

.search-box {
    width: 288px;
    height: 20px;
    margin-left: 15px;
    border: 1px solid #9fa6ba;
    display: flex;
    align-items: center;
    color: #666;
    padding-left: 6px;
    white-space: nowrap;
}

.search-text {
    width: 146px;
    overflow: hidden;
}

.search-box svg {
    width: 14px;
    height: 14px;
}

.search-scope {
    width: 115px;
    height: 18px;
    line-height: 18px;
    border-left: 1px solid #9fa6ba;
    margin-left: 7px;
    padding-left: 6px;
    display: flex;
    align-items: center;
    justify-content: space-between;
    padding-right: 4px;
}

.list-filter {
    display: flex;
    align-items: center;
    height: 30px;
    padding-left: 17px;
    padding-top: 5px;
    margin-top: 1px;
}

.list-filter b {
    font-size: 14px;
    color: #0072c6;
    width: 42px;
}

.unread {
    font-size: 14px;
    width: 95px;
}

.sort {
    font-size: 10.5px;
    margin-left: 15px;
    width: 99px;
    white-space: nowrap;
}

.list-filter svg {
    width: 8px;
    height: 12px;
}

.mail-item {
    position: relative;
    width: 276px;
    height: 62px;
    margin-left: 9px;
    background: #e0e0e0;
    padding-left: 27px;
}

.mail-item::before {
    content: "";
    position: absolute;
    left: 2px;
    top: 2px;
    bottom: 3px;
    width: 3px;
    background: #0060ac;
}

.mail-icons {
    display: flex;
    height: 23px;
    padding-top: 4px;
    padding-left: 191px;
    gap: 7px;
}

.mail-icons svg {
    width: 9px;
    height: 16px;
}

.mail-icons svg:last-child {
    width: 16px;
}

.mail-row {
    display: flex;
    color: #0060ac;
    font-size: 10.5px;
    line-height: 16px;
    white-space: nowrap;
}

.mail-row b {
    width: 196px;
}

.mail-row .mail-ohne {
    width: auto;
}

.mail-text {
    font-size: 10.8px;
    line-height: 15px;
    white-space: nowrap;
}

.ol-read {
    flex: 1;
    min-width: 0;
    padding-left: 12px;
}

.read-bar {
    display: flex;
    align-items: center;
    height: 20px;
    margin-top: 10px;
    padding-left: 4px;
    color: #666;
}

.read-bar svg {
    width: 16px;
    height: 14px;
    margin-right: 4px;
}

.read-bar span {
    width: 71px;
}

.read-bar .x-small {
    width: 11px;
    height: 11px;
    margin-right: 5px;
    margin-left: -1px;
}

.compose {
    margin-top: 15px;
    display: grid;
    grid-template-columns: 57px 58px 255px;
    column-gap: 11px;
    grid-template-rows: 26px 27px 20px;
    row-gap: 5px;
    align-items: stretch;
}

.send-btn {
    grid-row: 1 / 4;
    height: 75px;
    border: 1px solid #ababab;
    display: flex;
    flex-direction: column;
    align-items: center;
    padding-top: 21px;
}

.send-btn svg {
    width: 28px;
    height: 16px;
    margin-bottom: 9px;
}

.addr-btn {
    border: 1px solid #ababab;
    text-align: center;
    line-height: 23px;
}

.addr-input {
    border: 1px solid #ababab;
    height: 21px;
    align-self: center;
    color: #222;
    padding-left: 3px;
    line-height: 19px;
    white-space: nowrap;
    overflow: hidden;
}

.field-label {
    color: #666;
    line-height: 16px;
    align-self: start;
}

.subject {
    height: 20px;
}

.attach-row {
    display: flex;
    align-items: center;
    margin-top: 10px;
    margin-left: 68px;
    height: 115px;
}

.attach-row .field-label {
    width: 69px;
    flex: none;
    align-self: center;
}

.attach-list {
    width: 200px;
    height: 115px;
    overflow: hidden;
    flex: none;
}

.attach {
    height: 42px;
    border: 1px solid #ababab;
    display: flex;
    align-items: center;
    padding: 0 9px 0 4px;
    margin-bottom: 5px;
}

.attach-on {
    background: #b2d4ee;
    border-color: #85b8dd;
}

.attach-cut .att-name {
    align-self: flex-start;
    padding-top: 5px;
}

.att-icon {
    width: 32px;
    height: 32px;
    margin-right: 7px;
}

.pdf-text {
    font-family: "Liberation Sans", sans-serif;
    font-size: 10px;
    font-weight: 700;
    fill: #fff;
}

.att-name {
    flex: 1;
    line-height: 15.5px;
    font-size: 11.2px;
}

.att-name small {
    display: block;
    font-size: 10.5px;
    color: #666;
}

.att-scroll {
    width: 15px;
    height: 83px;
    margin-left: 39px;
    align-self: flex-start;
    border: 1px solid #ababab;
    margin-top: 2px;
}

.att-up {
    display: block;
    height: 14px;
    border-bottom: 1px solid #ababab;
    position: relative;
}

.att-up::after {
    content: "";
    position: absolute;
    left: 3px;
    top: 4px;
    border-left: 3.5px solid transparent;
    border-right: 3.5px solid transparent;
    border-bottom: 4px solid #666;
}

.mail-body {
    width: 420px;
    height: 590px;
    margin-top: 9px;
    border: 1px solid #ababab;
    padding: 16px 10px 0;
    color: #1f497d;
    font-size: 15.9px;
    line-height: 17px;
}

.ol-status {
    height: 22px;
    flex: none;
    border-top: 1px solid #bbb;
    background: #f1f1f1;
    display: flex;
    align-items: center;
    padding-left: 8px;
    color: #555;
    font-size: 10.5px;
}

.st-unread {
    margin-left: 18px;
    width: 612px;
}

.st-view {
    width: 37px;
    height: 21px;
    display: flex;
    align-items: center;
    justify-content: center;
}

.st-view svg {
    width: 14px;
    height: 16px;
}

.st-view-on {
    background: #c6c6c6;
}

.zoom-bar {
    display: flex;
    align-items: center;
    margin-left: 8px;
    gap: 5px;
    width: 127px;
}

.zoom-bar b {
    font-size: 13px;
}

.zoom-line {
    position: relative;
    width: 100px;
    height: 1px;
    background: #888;
}

.zoom-line i {
    position: absolute;
    left: 49px;
    top: -5px;
    width: 3px;
    height: 11px;
    background: #555;
}

.zoom-val {
    margin-left: 3px;
}

/* ---------- mySORBA ---------- */
.sorba {
    left: 960px;
    top: 0;
    width: 960px;
    height: 362px;
    display: flex;
    background: #f3f3f3;
    border-top: 1px solid #9a9a9a;
    font-size: 10.4px;
}

.sb-side {
    width: 60px;
    flex: none;
    background: #1066bd;
    border-left: 1px solid #a8a08c;
    padding-left: 12px;
}

.burger {
    width: 20px;
    margin-top: 53px;
    margin-bottom: 36px;
    margin-left: 7px;
}

.burger i {
    display: block;
    height: 1px;
    background: #fff;
    margin-bottom: 5px;
}

.tile {
    width: 35px;
    height: 35px;
    border-radius: 6px;
    margin-bottom: 20px;
    display: flex;
    align-items: center;
    justify-content: center;
}

.tile svg {
    width: 22px;
    height: 22px;
}

.t-purple { background: #a569c9; }
.t-red { background: #c0503c; }
.t-blue { background: #3c7fbf; }
.t-plum { background: #85549e; }

.t-kfm svg {
    width: 35px;
    height: 35px;
}

.kfm-text {
    font-family: "Liberation Sans", sans-serif;
    font-size: 13.5px;
    font-weight: 700;
    fill: #7e2233;
}

.tile-text {
    font-family: "Liberation Sans", sans-serif;
    font-size: 6.5px;
    font-weight: 700;
    fill: #fff;
}

.sb-main {
    flex: 1;
    min-width: 0;
    display: flex;
    flex-direction: column;
}

.sb-title {
    height: 35px;
    flex: none;
    background: #0f6ebf;
    color: #fff;
    display: flex;
    align-items: center;
    position: relative;
}

.sb-x {
    width: 12px;
    height: 14px;
    margin-left: 62px;
    color: #fff;
}

.sb-title .caret {
    margin-left: 15px;
}

.sb-caption {
    position: absolute;
    left: 374px;
    top: 9px;
    color: #cfe2f3;
    white-space: nowrap;
}

.sb-caption b {
    font-weight: 400;
    color: #fff;
}

.sb-winbtns {
    margin-left: auto;
    display: flex;
    align-items: center;
    padding-right: 18px;
}

.sb-winbtns .wb-min {
    margin-left: 0;
}

.sb-winbtns .wb-max {
    margin-left: 38px;
}

.sb-winbtns .wb-x {
    margin-left: 37px;
}

.sb-tools {
    height: 26px;
    flex: none;
    display: flex;
    align-items: center;
    position: relative;
    padding-left: 368px;
}

.tool-green {
    width: 140px;
    height: 24px;
    border-bottom: 1px solid #4fa265;
    margin-right: 4px;
}

.tool-box {
    height: 23px;
    border: 1px solid #e2e2e2;
    background: #f5f5f5;
    display: flex;
    align-items: center;
    justify-content: center;
    flex: none;
}

.tool-company {
    width: 120px;
    color: #f3f3f3;
}

.tool-label {
    margin-left: 5px;
    width: 57px;
    white-space: nowrap;
    color: #333;
}

.tool-search {
    width: 100px;
    height: 20px;
    background: #fff;
    border: 1px solid #b8b8b8;
    display: flex;
    align-items: center;
    justify-content: space-between;
    padding: 0 4px;
    color: #666;
    white-space: nowrap;
    flex: none;
}

.tool-search svg {
    width: 12px;
    height: 12px;
}

.tool-flag {
    width: 46px;
    margin-left: 7px;
    gap: 3px;
}

.tool-flag svg {
    width: 16px;
    height: 18px;
}

.tool-flag .chev {
    width: 8px;
    height: 5px;
}

.tool-info {
    width: 40px;
    margin-left: 4px;
}

.tool-info svg {
    width: 18px;
    height: 18px;
}

.sb-ribbon {
    height: 123px;
    flex: none;
    margin: 1px 8px 0 2px;
    background: #f1f1f1;
    border: 1px solid #d8d8d8;
}

.sb-tabs {
    display: flex;
    height: 27px;
    font-size: 13.5px;
    padding-left: 21px;
    align-items: center;
}

.sb-tabs span {
    white-space: nowrap;
    line-height: 27px;
}

.tab-start { width: 63px; }
.tab-stamm { width: 114px; }

.tab-extras {
    width: 73px;
    position: relative;
}

.tab-extras::after {
    content: "";
    position: absolute;
    left: 0;
    top: 23px;
    width: 39px;
    height: 3px;
    background: #1066bd;
}

.sb-groups {
    display: flex;
    height: 94px;
    padding-top: 3px;
}

.sb-group {
    display: flex;
    flex-direction: column;
    border-right: 1px solid #d2d2d2;
    flex: none;
}

.g287 { width: 287px; }
.g107 { width: 107px; }
.g112 { width: 112px; }

.pad8 {
    padding-left: 8px;
}

.sb-btn {
    flex: none;
    display: flex;
    flex-direction: column;
    align-items: center;
    text-align: center;
    padding-top: 4px;
    line-height: 13px;
    white-space: nowrap;
}

.sb-btn svg {
    width: 32px;
    height: 32px;
    margin-bottom: 2px;
}

.sep-short {
    height: 70px;
    border-right: 1px solid #d2d2d2;
}

.sb-lower {
    flex: 1;
    min-height: 0;
    display: flex;
    padding: 2px 6px 0 5px;
}

.navigator {
    width: 195px;
    flex: none;
    border: 1px solid #d8d8d8;
    background: #fff;
}

.nav-head {
    height: 43px;
    background: #f3f3f3;
    border-bottom: 1px solid #bbb;
    display: flex;
    align-items: center;
    padding: 0 0 2px 12px;
    font-size: 17.5px;
}

.nav-head span {
    width: 123px;
}

.nav-pin {
    width: 10px;
    height: 14px;
}

.nav-x {
    width: 11px;
    height: 11px;
    margin-left: 23px;
    color: #666;
}

.nav-tree {
    display: flex;
    align-items: center;
    height: 22px;
    padding-left: 7px;
}

.tree-chev {
    width: 6px;
    height: 10px;
    margin-right: 9px;
}

.tree-folder {
    width: 12px;
    height: 10px;
    background: #f59a3c;
    margin-right: 6px;
}

.tasks {
    flex: 1;
    min-width: 0;
    margin-left: 5px;
}

.task-tabs {
    display: flex;
    align-items: center;
    height: 27px;
    white-space: nowrap;
}

.ttab {
    height: 27px;
    display: flex;
    align-items: center;
    padding-bottom: 3px;
}

.ttab-on {
    width: 121px;
    background: #fff;
    border-top: 2px solid #b0b0b0;
    border-right: 1px solid #d2d2d2;
    padding-left: 11px;
}

.ttab-x {
    width: 8px;
    height: 8px;
    margin-left: 12px;
    color: #555;
}

.ttab-2 {
    width: 167px;
    padding-left: 10px;
    border-right: 1px solid #d2d2d2;
}

.ttab-3 {
    width: 210px;
    padding-left: 11px;
    border-right: 1px solid #d2d2d2;
}

.ttab-4 {
    width: 137px;
    padding-left: 11px;
}

.task-tabs .caret {
    margin: 0 0 3px 1px;
}

.tt-arrow {
    width: 5px;
    height: 9px;
    margin: 0 0 3px 16px;
}

.tt-arrow:last-child {
    margin-left: 14px;
}

.grid {
    width: 688px;
    margin-left: 1px;
    border-top: 1px solid #c0c0c0;
    background: #fff;
    font-size: 10.1px;
}

.grow {
    display: grid;
    grid-template-columns: 24px 22px 50px 22px 97px 342px 55px 76px;
    height: 23px;
    border-bottom: 1px solid #dcdcdc;
    line-height: 22px;
    white-space: nowrap;
}

.grow > span {
    border-right: 1px solid #dcdcdc;
    padding-left: 3px;
    overflow: hidden;
}

.ghead {
    background: #f3f3f3;
    color: #555;
    border-bottom-color: #c0c0c0;
}

.gfilter > span:first-child {
    padding: 7px 0 0 6px;
}

.grow .filter-ic {
    width: 10px;
    height: 8px;
}

.row-sel {
    background: #e4e4e4;
}

.cell-white {
    background: #fff;
}

.cell-ind {
    background: #fff;
    position: relative;
}

.row-sel .cell-ind {
    background: #f0f0f0;
}

.row-mark {
    position: absolute;
    left: 8px;
    top: 8px;
    border-top: 3.5px solid transparent;
    border-bottom: 3.5px solid transparent;
    border-left: 4px solid #666;
}

.grow > .cell-ic {
    padding: 3px 0 0 3px;
}

.grow svg {
    width: 16px;
    height: 16px;
}

.grow .clip {
    margin-top: -1px;
    width: 14px;
    height: 19px;
}

.row-red {
    color: #f00;
}

.row-alt {
    background: #f5f5f5;
}

.badge {
    display: inline-block;
    color: #444;
    background: #fff;
    border: 1px solid #c3cdd6;
    border-radius: 2px;
    line-height: 16px;
    padding: 0 2px;
    height: 18px;
    width: 48px;
    overflow: hidden;
    margin-top: 3px;
    vertical-align: top;
}

.badge-b {
    font-weight: 700;
}

/* ---------- Aktivitaet ---------- */
.activity {
    left: 940px;
    top: 359px;
    width: 980px;
    height: 672px;
    display: flex;
    flex-direction: column;
    background: #f3f3f3;
    border-left: 1px solid #1066bd;
    border-bottom: 2px solid #1066bd;
    box-shadow: 0 0 6px rgba(0, 0, 0, 0.4);
    font-size: 10.4px;
}

.ac-title {
    position: relative;
    height: 36px;
    flex: none;
    background: #0f6ebf;
    color: #fff;
    display: flex;
    align-items: center;
    justify-content: flex-end;
}

.ac-caption {
    position: absolute;
    left: 312px;
    top: 10px;
    white-space: nowrap;
}

.ac-max {
    width: 9px;
    height: 10px;
    border: 1px solid #fff;
    margin-left: 0;
}

.ac-close {
    width: 11px;
    height: 11px;
    margin: 0 21px 0 37px;
    color: #fff;
}

.ac-ribbon {
    height: 122px;
    flex: none;
    background: #f1f1f1;
    border-bottom: 1px solid #d2d2d2;
}

.ac-tabs {
    height: 28px;
    display: flex;
    font-size: 13.5px;
    padding-left: 75px;
    align-items: center;
}

.ac-tabs span {
    line-height: 28px;
}

.ac-tab-on {
    position: relative;
    width: 65px;
}

.ac-tab-2 { width: 72px; }
.ac-tab-3 { width: 80px; }

.ac-tab-on::after {
    content: "";
    position: absolute;
    left: 0;
    width: 31px;
    top: 23px;
    height: 3px;
    background: #1066bd;
}

.ac-groups {
    display: flex;
    height: 92px;
    padding-top: 3px;
}

.ac-group {
    display: flex;
    flex-direction: column;
    border-right: 1px solid #d2d2d2;
    flex: none;
}

.g109 { width: 109px; }
.g146 { width: 146px; }
.g123 { width: 123px; }
.g136 { width: 136px; }
.g132 { width: 132px; }
.g90 { width: 90px; }
.g67 { width: 67px; }

.ac-btn {
    flex: none;
    display: flex;
    flex-direction: column;
    align-items: center;
    text-align: center;
    padding-top: 4px;
    line-height: 13px;
    white-space: nowrap;
}

.ac-btn svg {
    width: 32px;
    height: 32px;
    margin-bottom: 2px;
}

.ac-group .rb-label {
    line-height: 14px;
}

.sep-inner {
    height: 70px;
    border-right: 1px solid #d2d2d2;
}

.ac-body {
    flex: 1;
    min-height: 0;
    display: flex;
}

.ac-pane {
    width: 946px;
    flex: none;
    display: flex;
    flex-direction: column;
    padding-left: 1px;
    border-right: 1px solid #d2d2d2;
}

.ac-pagetabs {
    height: 29px;
    flex: none;
    display: flex;
    align-items: center;
    border-bottom: 1px solid #c8c8c8;
    position: relative;
}

.pt {
    height: 28px;
    display: flex;
    align-items: center;
    white-space: nowrap;
    margin-top: 2px;
}

.pt-on {
    width: 89px;
    background: #f7f7f7;
    color: #1066bd;
    border-top: 2px solid #1066bd;
    border-right: 1px solid #c8c8c8;
    padding-left: 11px;
    height: 29px;
    margin-top: 1px;
}

.pt-on .ttab-x {
    margin-left: 8px;
}

.pt-2 {
    width: 100px;
    padding-left: 9px;
    border-right: 1px solid #dcdcdc;
}

.pt-3 {
    width: 95px;
    padding-left: 11px;
    border-right: 1px solid #dcdcdc;
}

.pt-4 {
    width: 86px;
    padding-left: 11px;
    border-right: 1px solid #dcdcdc;
}

.pt-caret {
    position: absolute;
    right: 8px;
    top: 13px;
}

.ac-scroll {
    height: 442px;
    flex: none;
    display: flex;
    background: #f7f7f7;
}

.ac-content {
    width: 927px;
    flex: none;
    overflow: hidden;
    padding: 9px 0 0 6px;
}

.form {
    display: flex;
    gap: 34px;
}

.form-left {
    display: grid;
    grid-template-columns: 123px 243px 76px;
    grid-auto-rows: 20px;
    row-gap: 6px;
    align-items: center;
    flex: none;
}

.form-left > label {
    grid-column: 1;
}

.form-left > .inp,
.form-left > .status-row,
.form-left > .date-row {
    grid-column: 2;
}

.form-left > .span2 {
    grid-column: 2 / 4;
}

.form-right {
    display: grid;
    grid-template-columns: 123px 100px 221px;
    width: 444px;
    grid-auto-rows: 20px;
    row-gap: 6px;
    align-items: center;
}

.form-right .inp-off {
    margin-left: 8px;
    width: 213px;
    border-right: none;
}

label {
    font-size: 10.5px;
    white-space: nowrap;
    color: #444;
}

.inp {
    height: 20px;
    background: #fff;
    border: 1px solid #b8b8b8;
    font-size: 10.3px;
    line-height: 18px;
    padding-left: 2px;
    display: flex;
    align-items: center;
    justify-content: space-between;
    white-space: nowrap;
    overflow: hidden;
    color: #333;
}

.inp .caret {
    margin-left: auto;
}

.combo {
    padding-right: 4px;
}

.inp-off {
    background: #f3f3f3;
    border-color: #d2d2d2;
    color: #555;
}

.inp-off .caret {
    border-top-color: #bbb;
}

.type-icon {
    grid-column: 3;
    grid-row: 2 / 4;
    width: 22px;
    height: 28px;
    margin: -8px 0 0 11px;
}

.badge-wide {
    width: 86px;
    margin-top: 0;
    border-radius: 3px;
    text-align: center;
    padding: 0;
}

.date-row {
    display: flex;
    gap: 6px;
}

.date {
    width: 84px;
}

.time {
    width: 56px;
}

.info-box {
    grid-column: 2 / 4;
    grid-row: 4 / 9;
    height: 132px;
    align-self: start;
    background: #f3f3f3;
    border: 1px solid #d2d2d2;
    border-right: none;
}

.files-label {
    margin-top: 25px;
    font-size: 10.5px;
    line-height: 16px;
    height: 20px;
}

.files {
    margin-left: 5px;
    width: 915px;
    border-top: 1px solid #d2d2d2;
    padding: 5px 0 0 6px;
}

.file-card {
    width: 200px;
}

.file-preview {
    position: relative;
    width: 192px;
    height: 146px;
    background: #fff;
    border: 1px solid #d2d2d2;
    display: flex;
    align-items: center;
    justify-content: center;
}

.file-del {
    position: absolute;
    right: 2px;
    top: 2px;
    width: 27px;
    height: 23px;
    background: #fff;
    border: 1px solid #999;
    display: flex;
    align-items: center;
    justify-content: center;
}

.file-del svg {
    width: 10px;
    height: 13px;
}

.file-env {
    width: 60px;
    height: 43px;
    margin-bottom: 4px;
}

.file-link {
    display: block;
    width: 185px;
    margin: 5px 0 0 9px;
    color: #1a85cb;
    text-decoration: underline;
    font-size: 10.5px;
    line-height: 14px;
    white-space: nowrap;
    overflow: hidden;
}

.file-meta {
    width: 183px;
    margin: 2px 0 0 10px;
    display: flex;
    justify-content: space-between;
    color: #777;
    font-size: 10px;
    line-height: 14px;
}

.vscroll {
    width: 17px;
    flex: none;
    display: flex;
    flex-direction: column;
    margin-top: 1px;
    background: #f0f0f0;
}

.sb-btn-up,
.sb-btn-down {
    height: 15px;
    background: #fff;
    border: 1px solid #bbb;
    display: flex;
    align-items: center;
    justify-content: center;
    flex: none;
}

.sb-btn-down {
    margin-top: 82px;
}

.vthumb {
    height: 326px;
    background: #fff;
    border: 1px solid #bbb;
    flex: none;
}

.tri-up, .tri-down, .tri-left, .tri-right {
    width: 0;
    height: 0;
}

.tri-up {
    border-left: 3px solid transparent;
    border-right: 3px solid transparent;
    border-bottom: 4px solid #666;
}

.tri-down {
    border-left: 3px solid transparent;
    border-right: 3px solid transparent;
    border-top: 4px solid #666;
}

.tri-left {
    border-top: 3px solid transparent;
    border-bottom: 3px solid transparent;
    border-right: 4px solid #666;
}

.tri-right {
    border-top: 3px solid transparent;
    border-bottom: 3px solid transparent;
    border-left: 4px solid #666;
}

.hscroll {
    height: 15px;
    flex: none;
    display: flex;
    background: #f0f0f0;
    width: 926px;
    margin-left: 2px;
}

.hbtn {
    width: 16px;
    height: 15px;
    background: #fff;
    border: 1px solid #bbb;
    display: flex;
    align-items: center;
    justify-content: center;
    flex: none;
}

.hthumb {
    width: 740px;
    background: #fff;
    border: 1px solid #bbb;
    flex: none;
}

.hbtn-r {
    margin-left: 152px;
}

.ac-side {
    flex: 1;
    padding-top: 16px;
    padding-left: 9px;
}

.ac-side span {
    writing-mode: vertical-rl;
    font-size: 10.5px;
    white-space: nowrap;
    color: #333;
}

.ac-status {
    height: 23px;
    flex: none;
    display: flex;
    align-items: center;
    background: #f1f1f1;
    border-top: 1px solid #d8d8d8;
    padding: 0 24px 2px 7px;
    font-size: 10.8px;
    white-space: nowrap;
}

.st-folder {
    width: 16px;
    height: 14px;
    margin-right: 4px;
}

.st-flag {
    width: 12px;
    height: 16px;
    margin-left: auto;
    margin-right: 7px;
}

.st-pen {
    width: 12px;
    height: 16px;
    margin-left: 17px;
    margin-right: 8px;
}

.st-sep {
    margin-left: 10px;
    padding-left: 6px;
    border-left: 1px solid #d2d2d2;
    line-height: 20px;
    width: 82px;
}

.st-date {
    width: 90px;
    flex: none;
}

.st-bis {
    width: 24px;
    text-align: center;
}

/* Logos */
.logo {
    position: absolute;
    width: 46px;
    height: 46px;
}

.logo-back {
    left: 1030px;
    top: 10px;
}

.logo-front {
    left: 950px;
    top: 369px;
}

.logo-caret {
    position: absolute;
    left: 1002px;
    top: 377px;
}

.arrows {
    position: absolute;
    left: 0;
    top: 0;
    width: 1920px;
    height: 1031px;
    pointer-events: none;
}
```
